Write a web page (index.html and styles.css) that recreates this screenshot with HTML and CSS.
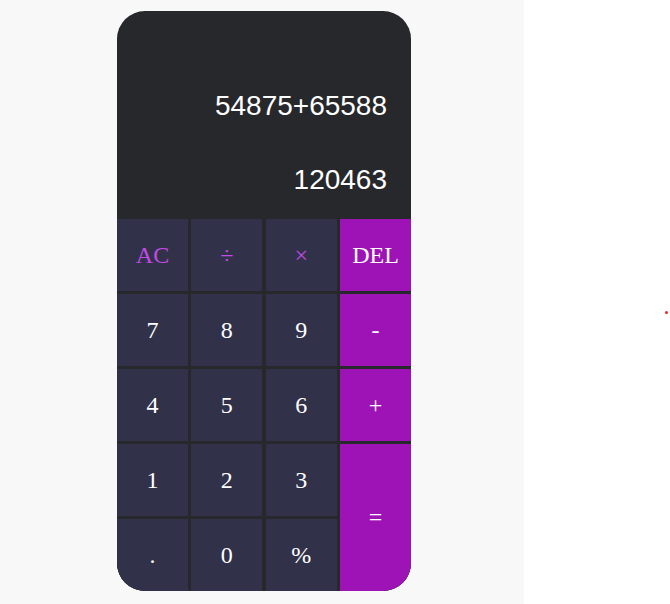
FILE: index.html
```html
<!DOCTYPE html>
<html>
<head>
<meta charset="utf-8">
<link rel="stylesheet" href="styles.css">
</head>
<body>
<div class="stage">
  <div class="calc">
    <div class="display">
      <div class="line expr">54875+65588</div>
      <div class="line result">120463</div>
    </div>
    <div class="keys">
      <div class="key op">AC</div>
      <div class="key op">÷</div>
      <div class="key op">×</div>
      <div class="key accent">DEL</div>
      <div class="key">7</div>
      <div class="key">8</div>
      <div class="key">9</div>
      <div class="key accent">-</div>
      <div class="key">4</div>
      <div class="key">5</div>
      <div class="key">6</div>
      <div class="key accent">+</div>
      <div class="key">1</div>
      <div class="key">2</div>
      <div class="key">3</div>
      <div class="key accent equals">=</div>
      <div class="key">.</div>
      <div class="key">0</div>
      <div class="key">%</div>
    </div>
  </div>
</div>
<div class="dot"></div>
</body>
</html>
```
FILE: styles.css
```css
html, body {
  margin: 0;
  padding: 0;
  background: #ffffff;
}
.stage {
  width: 524px;
  height: 604px;
  background: #f8f8f8;
  box-sizing: border-box;
  padding: 11px 0 0 117px;
}
.calc {
  width: 294px;
  height: 580px;
  border-radius: 28px;
  overflow: hidden;
  background: #27282c;
  display: flex;
  flex-direction: column;
}
.display {
  height: 208px;
  box-sizing: border-box;
  padding: 80px 24px 0 0;
  display: flex;
  flex-direction: column;
  align-items: flex-end;
  font-family: "Liberation Sans", Arial, sans-serif;
  font-size: 28px;
  line-height: 30px;
  color: #ffffff;
}
.result {
  margin-top: 44px;
}
.keys {
  display: grid;
  grid-template-columns: repeat(4, 71px);
  grid-auto-rows: 72px;
  column-gap: 3.33px;
  row-gap: 3px;
  background: #27282c;
}
.key {
  background: #32314a;
  color: #ffffff;
  font-family: "Liberation Serif", "Times New Roman", serif;
  font-size: 24px;
  display: flex;
  align-items: center;
  justify-content: center;
}
.key.op {
  color: #c24ae6;
}
.key.accent {
  background: #9e13b5;
  color: #ffffff;
}
.key.equals {
  grid-row: span 2;
}
.dot {
  position: absolute;
  left: 665px;
  top: 311px;
  width: 3px;
  height: 3px;
  background: #e8262a;
  border-radius: 50%;
}
```
